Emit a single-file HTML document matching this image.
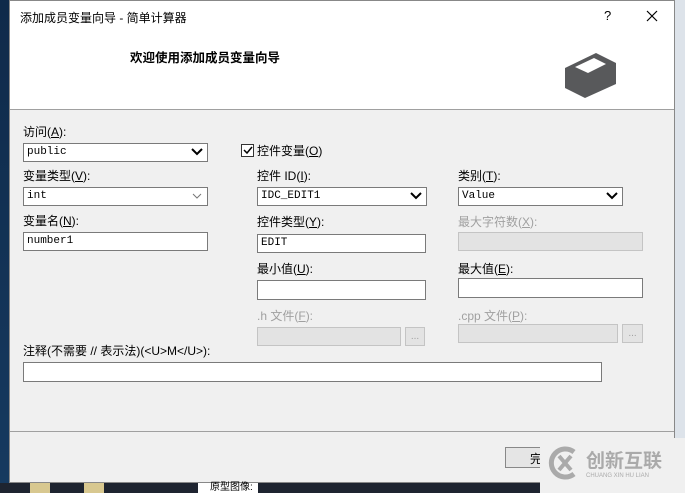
<!DOCTYPE html><html><head><meta charset="utf-8"><style>
*{margin:0;padding:0;box-sizing:border-box}
body{width:685px;height:493px;overflow:hidden;background:#1a2a40;position:relative;font-family:"Liberation Sans","Noto Sans CJK SC",sans-serif;font-size:12px;color:#000}
.a{position:absolute;white-space:nowrap}
.m{font-family:"Liberation Mono","Noto Sans CJK SC",monospace;font-size:11px}
.in{position:absolute;background:#fff;border:1px solid #7a7a7a}
.dis{position:absolute;background:#e3e3e3;border:1px solid #c4c4c4}
.g{color:#a0a0a0}
.chev{position:absolute;right:4px;top:3px}
</style></head><body>
<div class="a" style="left:0;top:0;width:9px;height:493px;background:linear-gradient(#0f2a4a,#163a60)"></div>
<div class="a" style="left:675px;top:0;width:10px;height:493px;background:#dde3ea"></div>
<div class="a" style="left:9px;top:0;width:666px;height:483px;background:#f0f0f0;border:1px solid #888"></div>
<div class="a" style="left:10px;top:1px;width:664px;height:109px;background:#fff;border-bottom:1px solid #a0a0a0"></div>
<div class="a" style="left:20px;top:9px;font-size:12px;color:#000">添加成员变量向导 - 简单计算器</div>
<div class="a" style="left:604px;top:8px;font-size:13px">?</div>
<svg class="a" style="left:646px;top:10px" width="12" height="12"><path d="M1 1l10 10M11 1L1 11" stroke="#000" stroke-width="1.2"/></svg>
<div class="a" style="left:130px;top:47px;font-weight:bold;font-size:12.5px">欢迎使用添加成员变量向导</div>
<svg class="a" style="left:564px;top:52px" width="54" height="48"><polygon points="1,16 32,1 52,11 52,32 21,46 1,36" fill="#58595b"/><polygon points="11,15 30,6 42,12 24,21" fill="#fff"/></svg>

<div class="a" style="left:23px;top:123px">访问(<u>A</u>):</div>
<div class="in m" style="left:23px;top:143px;width:185px;height:19px;padding:2px 3px">public<svg class="chev" width="12" height="10"><path d="M1 2l5 5 5-5" stroke="#000" stroke-width="2" fill="none"/></svg></div>
<div class="a" style="left:23px;top:167px">变量类型(<u>V</u>):</div>
<div class="in m" style="left:23px;top:187px;width:185px;height:19px;padding:2px 3px">int<svg class="chev" width="12" height="10"><path d="M2 3l4 4 4-4" stroke="#777" stroke-width="1" fill="none"/></svg></div>
<div class="a" style="left:23px;top:212px">变量名(<u>N</u>):</div>
<div class="in m" style="left:23px;top:232px;width:185px;height:19px;padding:2px 3px">number1</div>

<div class="a" style="left:241px;top:144px;width:13px;height:13px;background:#fff;border:1px solid #333"></div>
<svg class="a" style="left:242px;top:145px" width="11" height="11"><path d="M2 5l3 3 5-6" stroke="#000" stroke-width="1.5" fill="none"/></svg>
<div class="a" style="left:257px;top:142px">控件变量(<u>O</u>)</div>
<div class="a" style="left:257px;top:167px">控件 ID(<u>I</u>):</div>
<div class="in m" style="left:257px;top:187px;width:170px;height:19px;padding:2px 3px">IDC_EDIT1<svg class="chev" width="12" height="10"><path d="M1 2l5 5 5-5" stroke="#000" stroke-width="2" fill="none"/></svg></div>
<div class="a" style="left:257px;top:213px">控件类型(<u>Y</u>):</div>
<div class="in m" style="left:257px;top:234px;width:169px;height:19px;padding:2px 3px">EDIT</div>
<div class="a" style="left:257px;top:260px">最小值(<u>U</u>):</div>
<div class="in" style="left:257px;top:280px;width:169px;height:20px"></div>
<div class="a g" style="left:257px;top:307px">.h 文件(<u>F</u>):</div>
<div class="dis" style="left:257px;top:327px;width:144px;height:19px"></div>
<div class="dis g" style="left:405px;top:327px;width:20px;height:19px;font-size:10px;text-align:center;line-height:18px">...</div>

<div class="a" style="left:458px;top:167px">类别(<u>T</u>):</div>
<div class="in m" style="left:458px;top:187px;width:165px;height:19px;padding:2px 3px">Value<svg class="chev" width="12" height="10"><path d="M1 2l5 5 5-5" stroke="#000" stroke-width="2" fill="none"/></svg></div>
<div class="a g" style="left:458px;top:213px">最大字符数(<u>X</u>):</div>
<div class="dis" style="left:458px;top:232px;width:185px;height:19px"></div>
<div class="a" style="left:458px;top:260px">最大值(<u>E</u>):</div>
<div class="in" style="left:458px;top:278px;width:185px;height:20px"></div>
<div class="a g" style="left:458px;top:307px">.cpp 文件(<u>P</u>):</div>
<div class="dis" style="left:458px;top:324px;width:160px;height:19px"></div>
<div class="dis g" style="left:622px;top:324px;width:21px;height:19px;font-size:10px;text-align:center;line-height:18px">...</div>

<div class="a" style="left:23px;top:342px">注释(不需要 // 表示法)(&lt;U&gt;M&lt;/U&gt;):</div>
<div class="in" style="left:23px;top:362px;width:579px;height:20px"></div>

<div class="a" style="left:10px;top:431px;width:664px;height:1px;background:#a0a0a0"></div>
<div class="a" style="left:505px;top:447px;width:60px;height:21px;border:1px solid #888;background:#e5e5e5;padding:2px 0 0 24px">完</div>

<div class="a" style="left:0;top:483px;width:685px;height:10px;background:#1e2430"></div>
<div class="a" style="left:30px;top:483px;width:20px;height:10px;background:#d8c890"></div>
<div class="a" style="left:84px;top:483px;width:20px;height:10px;background:#d8c890"></div>
<div class="a" style="left:198px;top:483px;width:60px;height:10px;background:#fff;font-size:10px;line-height:10px;padding-left:12px">原型图像:</div>
<div class="a" style="left:540px;top:438px;width:145px;height:55px;background:#f0f0f0"></div>
<svg class="a" style="left:548px;top:446px" width="32" height="34"><path d="M26 6A14 14 0 1 0 26 28" stroke="#aaa" stroke-width="5" fill="none"/><path d="M11 10l12 14M23 10l-12 14" stroke="#aaa" stroke-width="4"/></svg>
<div class="a" style="left:586px;top:446px;font-size:19px;color:#aaa;font-weight:bold">创新互联</div>
<div class="a" style="left:586px;top:473px;font-size:6px;color:#aaa">CHUANG XIN HU LIAN</div>
</body></html>
